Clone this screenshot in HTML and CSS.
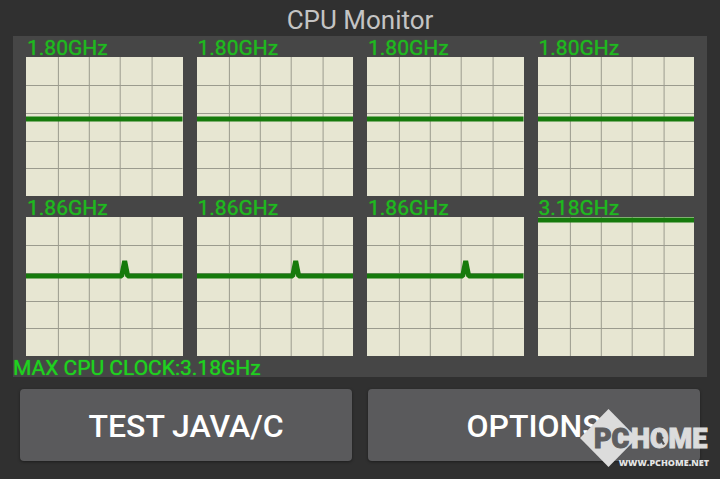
FILE: index.html
```html
<!DOCTYPE html>
<html lang="en">
<head>
  <meta charset="UTF-8">
  <meta name="viewport" content="width=device-width, initial-scale=1.0">
  <title>CPU Monitor</title>
  <link rel="stylesheet" href="styles.css">
</head>
<body>
  <h1>CPU Monitor</h1>

  <section class="panel">
    <div class="cores" id="cores"></div>
    <p class="max-clock">MAX CPU CLOCK:3.18GHz</p>
  </section>

  <div class="actions">
    <button type="button">TEST JAVA/C</button>
    <button type="button">OPTIONS</button>
  </div>

  <div class="watermark">
    <svg viewBox="0 0 130 60" width="130" height="60" aria-hidden="true">
      <path class="mark" d="M28.5 1L57 30L28.5 59L0 30Z"/>
      <text class="pc" x="14" y="40">PC</text>
      <text class="home" x="51" y="40">HOME</text>
      <path class="cursor" d="M77 24L78 34L80 32L83 37L85 36L82 31L84 30Z"/>
      <text class="site" x="129" y="58" text-anchor="end">WWW.PCHOME.NET</text>
    </svg>
  </div>

  <script src="script.js"></script>
</body>
</html>
```

FILE: styles.css
```css
* { box-sizing: border-box; }
body { margin: 0; min-height: 100vh; background: #303030; color: #c4c4c4; font-family: Roboto, "Liberation Sans", sans-serif; position: relative; }
h1 { margin: 0; padding-top: 4px; font-size: 26px; line-height: 32px; font-weight: 400; text-align: center; }

.panel { margin: 0 13px; background: #464646; }
.cores { display: grid; grid-template-columns: repeat(4, 1fr); column-gap: 14px; padding: 0 13px; }
.label, .max-clock { margin: 0; padding-top: 4px; font-size: 21px; line-height: 17px; text-shadow: 0 0 1px currentColor; }
.label { padding-left: 1px; color: #20b820; }
.max-clock { color: #20d020; }
.graph { display: block; width: 100%; height: 139px; background: #e7e6d2; }
.grid { fill: none; stroke: #9b9b8e; stroke-width: 1; }
.trace { fill: none; stroke: #167a0c; stroke-width: 5; stroke-linejoin: bevel; }

.actions { display: grid; grid-template-columns: 1fr 1fr; gap: 16px; padding: 12px 20px 18px; }
button { height: 72px; padding: 2px 0 0; border: none; border-radius: 4px; background: #5a5a5c; color: #fff; font-family: inherit; font-size: 32px; font-weight: 500; box-shadow: 0 1px 3px rgba(0,0,0,0.4); cursor: pointer; }

.watermark { position: absolute; right: 10px; bottom: 11px; pointer-events: none; }
.watermark svg { display: block; }
.mark { fill: #dcdcdc; }
.pc, .home { font-size: 27px; font-weight: 900; stroke-width: 1; }
.pc { fill: #5e5e60; stroke: #5e5e60; }
.home { fill: #dcdcdc; stroke: #dcdcdc; }
.cursor { fill: #505052; }
.site { font-family: "Open Sans", sans-serif; font-size: 9px; font-weight: 800; fill: #e4e4e4; }
```

FILE: script.js
```js
// trace points are in graph units, 157 wide and 139 high
const flat = '0,62 157,62';
const spike = '0,59 96,59 99,44 102,59 157,59';
const full = '0,3 157,3';

const cores = [
  { clock: '1.80GHz', trace: flat },
  { clock: '1.80GHz', trace: flat },
  { clock: '1.80GHz', trace: flat },
  { clock: '1.80GHz', trace: flat },
  { clock: '1.86GHz', trace: spike },
  { clock: '1.86GHz', trace: spike },
  { clock: '1.86GHz', trace: spike },
  { clock: '3.18GHz', trace: full }
];

const grid = 'M32.5 0V139M63.5 0V139M94.5 0V139M126.5 0V139M0 28.5H157M0 56.5H157M0 84.5H157M0 111.5H157';

document.getElementById('cores').innerHTML = cores.map(core => `
  <div class="core">
    <p class="label">${core.clock}</p>
    <svg class="graph" viewBox="0 0 157 139" preserveAspectRatio="none">
      <path class="grid" d="${grid}"/>
      <polyline class="trace" points="${core.trace}"/>
    </svg>
  </div>
`).join('');
```
